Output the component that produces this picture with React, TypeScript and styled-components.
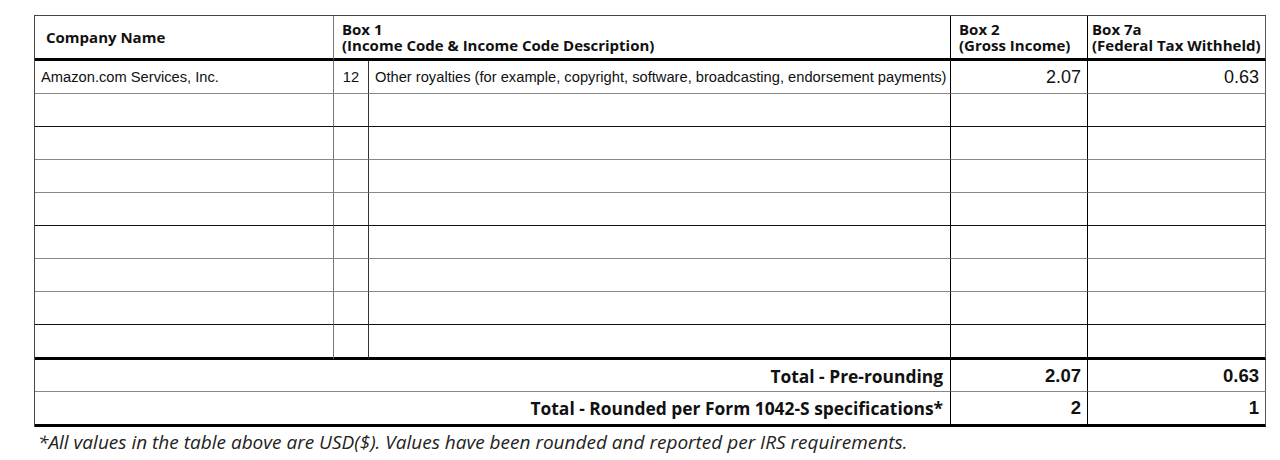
import React from "react";
import styled, { createGlobalStyle } from "styled-components";

const GlobalStyle = createGlobalStyle`
  *, *::before, *::after { box-sizing: border-box; }
  html, body { margin: 0; padding: 0; background: #ffffff; }
  body { font-family: "Liberation Sans", Arial, sans-serif; color: #111; }
`;

const Page = styled.div`
  padding: 15px 0 0 34px;
  width: 1280px;
  height: 460px;
  overflow: hidden;
`;

const Table = styled.table`
  border-collapse: separate;
  border-spacing: 0;
  table-layout: fixed;
  width: 1231px;
  border-top: 1px solid #444;
  border-left: 1px solid #444;
`;

const HeadCell = styled.th<{ $pl: number; $line: string }>`
  height: 45px;
  padding: 0 1px 1px ${(p) => p.$pl}px;
  text-align: left;
  vertical-align: middle;
  font-family: "Open Sans", "Noto Sans", sans-serif;
  font-weight: 700;
  font-size: 15px;
  line-height: 16px;
  color: #111;
  border-bottom: 3px solid #000;
  border-right: 1px solid ${(p) => p.$line};
  white-space: nowrap;
`;

const Cell = styled.td<{ $align?: string; $big?: boolean; $bottom: string; $right: string; $thick?: boolean }>`
  height: ${(p) => (p.$thick ? 35 : 33)}px;
  padding: 0 6px 0 6px;
  text-align: ${(p) => p.$align || "left"};
  vertical-align: middle;
  font-size: ${(p) => (p.$big ? 18 : 14.7)}px;
  line-height: 16px;
  color: #111;
  border-bottom: ${(p) => (p.$thick ? 3 : 1)}px solid ${(p) => p.$bottom};
  border-right: 1px solid ${(p) => p.$right};
  white-space: nowrap;
  overflow: hidden;
`;

const TotalLabel = styled.td<{ $last?: boolean }>`
  height: ${(p) => (p.$last ? 35 : 32)}px;
  padding: 0 7px 0 6px;
  text-align: right;
  vertical-align: middle;
  font-family: "Open Sans", "Noto Sans", sans-serif;
  font-weight: 700;
  font-size: 17.4px;
  color: #111;
  border-bottom: ${(p) => (p.$last ? "3px solid #000" : "1px solid #888")};
  border-right: 1px solid #000;
  white-space: nowrap;
`;

const TotalValue = styled.td<{ $last?: boolean; $edge?: string }>`
  height: ${(p) => (p.$last ? 35 : 32)}px;
  padding: 0 6px 0 6px;
  text-align: right;
  vertical-align: middle;
  font-family: "Liberation Sans", Arial, sans-serif;
  font-weight: 700;
  font-size: 18.5px;
  color: #111;
  border-bottom: ${(p) => (p.$last ? "3px solid #000" : "1px solid #888")};
  border-right: 1px solid ${(p) => p.$edge || "#000"};
`;

const Note = styled.p`
  margin: 4px 0 0 4px;
  font-family: "Open Sans", "Noto Sans", sans-serif;
  font-style: italic;
  font-size: 19px;
  line-height: 22px;
  color: #222;
`;

const rowTones = ["#888", "#111", "#888", "#888", "#111", "#888", "#888", "#111"];

const HeadLines: React.FC<{ a: string; b: string }> = ({ a, b }) => (
  <>
    {a}
    <br />
    {b}
  </>
);

export default function App() {
  const emptyRows = 8;
  return (
    <Page>
      <GlobalStyle />
      <Table>
        <colgroup>
          <col style={{ width: 299 }} />
          <col style={{ width: 35 }} />
          <col style={{ width: 582 }} />
          <col style={{ width: 137 }} />
          <col style={{ width: 178 }} />
        </colgroup>
        <thead>
          <tr>
            <HeadCell $pl={11} $line="#777">Company Name</HeadCell>
            <HeadCell $pl={8} $line="#000" colSpan={2}>
              <HeadLines a="Box 1" b="(Income Code & Income Code Description)" />
            </HeadCell>
            <HeadCell $pl={8} $line="#000">
              <HeadLines a="Box 2" b="(Gross Income)" />
            </HeadCell>
            <HeadCell $pl={4} $line="#555">
              <HeadLines a="Box 7a" b="(Federal Tax Withheld)" />
            </HeadCell>
          </tr>
        </thead>
        <tbody>
          <tr>
            <Cell $bottom={rowTones[0]} $right="#777">Amazon.com Services, Inc.</Cell>
            <Cell $bottom={rowTones[0]} $right="#333" $align="center">12</Cell>
            <Cell $bottom={rowTones[0]} $right="#000">
              Other royalties (for example, copyright, software, broadcasting, endorsement payments)
            </Cell>
            <Cell $bottom={rowTones[0]} $right="#000" $align="right" $big>2.07</Cell>
            <Cell $bottom={rowTones[0]} $right="#555" $align="right" $big>0.63</Cell>
          </tr>
          {Array.from({ length: emptyRows }).map((_, i) => {
            const last = i === emptyRows - 1;
            const tone = last ? "#000" : rowTones[i + 1];
            return (
              <tr key={i}>
                <Cell $bottom={tone} $thick={last} $right="#777" />
                <Cell $bottom={tone} $thick={last} $right="#333" />
                <Cell $bottom={tone} $thick={last} $right="#000" />
                <Cell $bottom={tone} $thick={last} $right="#000" />
                <Cell $bottom={tone} $thick={last} $right="#555" />
              </tr>
            );
          })}
          <tr>
            <TotalLabel colSpan={3}>Total - Pre-rounding</TotalLabel>
            <TotalValue>2.07</TotalValue>
            <TotalValue $edge="#555">0.63</TotalValue>
          </tr>
          <tr>
            <TotalLabel colSpan={3} $last>Total - Rounded per Form 1042-S specifications*</TotalLabel>
            <TotalValue $last>2</TotalValue>
            <TotalValue $last $edge="#555">1</TotalValue>
          </tr>
        </tbody>
      </Table>
      <Note>*All values in the table above are USD($). Values have been rounded and reported per IRS requirements.</Note>
    </Page>
  );
}
